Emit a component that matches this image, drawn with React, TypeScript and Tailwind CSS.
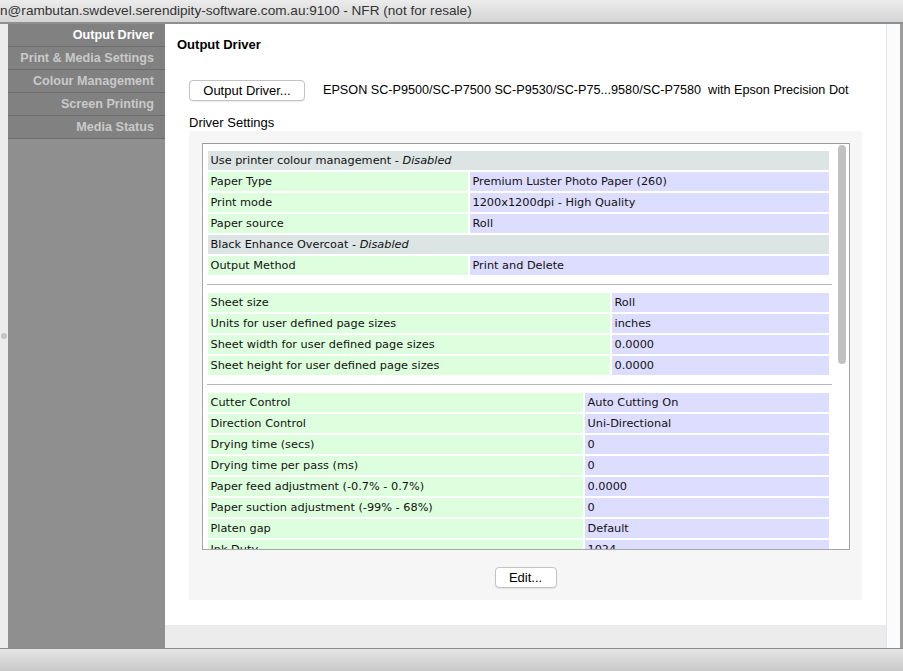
import React from 'react';

type Row = { label: string; value?: string; note?: string };

const GROUPS: { labelW: string; rows: Row[] }[] = [
  {
    labelW: 'w-[260px]',
    rows: [
      { label: 'Use printer colour management', note: 'Disabled' },
      { label: 'Paper Type', value: 'Premium Luster Photo Paper (260)' },
      { label: 'Print mode', value: '1200x1200dpi - High Quality' },
      { label: 'Paper source', value: 'Roll' },
      { label: 'Black Enhance Overcoat', note: 'Disabled' },
      { label: 'Output Method', value: 'Print and Delete' },
    ],
  },
  {
    labelW: 'w-[402px]',
    rows: [
      { label: 'Sheet size', value: 'Roll' },
      { label: 'Units for user defined page sizes', value: 'inches' },
      { label: 'Sheet width for user defined page sizes', value: '0.0000' },
      { label: 'Sheet height for user defined page sizes', value: '0.0000' },
    ],
  },
  {
    labelW: 'w-[375px]',
    rows: [
      { label: 'Cutter Control', value: 'Auto Cutting On' },
      { label: 'Direction Control', value: 'Uni-Directional' },
      { label: 'Drying time (secs)', value: '0' },
      { label: 'Drying time per pass (ms)', value: '0' },
      { label: 'Paper feed adjustment (-0.7% - 0.7%)', value: '0.0000' },
      { label: 'Paper suction adjustment (-99% - 68%)', value: '0' },
      { label: 'Platen gap', value: 'Default' },
      { label: 'Ink Duty', value: '1024' },
    ],
  },
];

const MENU = [
  { label: 'Output Driver', active: true },
  { label: 'Print & Media Settings' },
  { label: 'Colour Management' },
  { label: 'Screen Printing' },
  { label: 'Media Status' },
];

const SettingsGroup = ({ labelW, rows }: { labelW: string; rows: Row[] }) => (
  <div className="flex flex-col gap-[2px]">
    {rows.map((r) =>
      r.note ? (
        <div key={r.label} className="h-[19px] leading-[19px] pl-[3px] bg-[#dce4e4] whitespace-nowrap">
          {r.label} - <i>{r.note}</i>
        </div>
      ) : (
        <div key={r.label} className="flex gap-[2px] h-[19px] leading-[19px] whitespace-nowrap">
          <div className={`${labelW} shrink-0 pl-[3px] bg-[#ddffdd]`}>{r.label}</div>
          <div className="flex-1 pl-[3px] bg-[#ddddff]">{r.value}</div>
        </div>
      )
    )}
  </div>
);

const Separator = () => <div className="mt-[9px] mb-[8px] -ml-px -mr-[3px] h-px bg-[#b6b6b6]" />;

export default function App() {
  return (
    <div className="w-[903px] h-[671px] flex flex-col overflow-hidden bg-[#ececec] font-['Liberation_Sans',Arial,sans-serif] text-[13px] text-black">
      {/* window title */}
      <div className="h-[24px] shrink-0 flex items-center bg-gradient-to-b from-[#ececec] to-[#d5d5d5] border-b-2 border-[#8f8f8f] rounded-tr-[5px] text-[13.6px] text-[#333] whitespace-nowrap overflow-hidden">
        n@rambutan.swdevel.serendipity-software.com.au:9100 - NFR (not for resale)
      </div>

      <div className="flex flex-1 min-h-0">
        {/* left edge */}
        <div className="w-[8px] shrink-0 bg-[#ececec] flex items-center justify-center">
          <div className="w-[6px] h-[6px] rounded-full bg-[#c4c4c4]" />
        </div>

        {/* sidebar */}
        <div className="w-[157px] shrink-0 bg-[#8f8f8f] flex flex-col">
          {MENU.map((m) => (
            <div
              key={m.label}
              className={`h-[23px] leading-[22px] text-right pr-[11px] font-bold text-[12.6px] bg-[#818181] border-b border-[#6c6c6c] whitespace-nowrap ${
                m.active ? 'text-white' : 'text-[#c9c9c9]'
              }`}
            >
              {m.label}
            </div>
          ))}
        </div>

        {/* main */}
        <div className="flex-1 flex flex-col">
          <div className="h-[601px] bg-white pl-[12px] pt-[13px]">
            <h1 className="font-bold leading-[16px]">Output Driver</h1>
            <div className="ml-[12px] mt-[27px] flex items-center">
              <button className="w-[116px] h-[21px] rounded-[4px] border border-[#c3c3c3] bg-white shadow-[0_1px_1px_rgba(0,0,0,0.08)]">
                Output Driver...
              </button>
              <span className="ml-[18px] text-[12.65px] whitespace-nowrap">
                EPSON SC-P9500/SC-P7500 SC-P9530/SC-P75...9580/SC-P7580&nbsp; with Epson Precision Dot
              </span>
            </div>
            <div className="ml-[12px] mt-[14px] leading-[16px]">Driver Settings</div>
            <div className="ml-[12px] w-[673px] h-[469px] bg-[#f6f6f6] p-[12px] flex flex-col items-center">
              <div className="w-[648px] h-[408px] border border-[#a6a6a6] border-t-[#9a9a9a] bg-white flex overflow-hidden">
                <div className="flex-1 overflow-hidden pt-[7px] pl-[5px] pr-[7px] font-['DejaVu_Sans',Verdana,sans-serif] text-[11.3px] text-[#111]">
                  {GROUPS.map((g, i) => (
                    <React.Fragment key={i}>
                      {i > 0 && <Separator />}
                      <SettingsGroup labelW={g.labelW} rows={g.rows} />
                    </React.Fragment>
                  ))}
                </div>
                <div className="w-[13px] shrink-0 pt-[1px] flex justify-center">
                  <div className="w-[8px] h-[219px] rounded-full bg-[#c1c1c1]" />
                </div>
              </div>
              <button className="mt-[17px] w-[62px] h-[21px] rounded-[4px] border border-[#c3c3c3] bg-white shadow-[0_1px_1px_rgba(0,0,0,0.08)]">
                Edit...
              </button>
            </div>
          </div>
          <div className="flex-1 bg-[#ececec]" />
        </div>

        {/* right scroll track */}
        <div className="w-[14px] shrink-0 bg-[#fafbfd] border-l border-[#e3e3e3]" />
        <div className="w-[3px] shrink-0 bg-[#9c9c9c]" />
      </div>

      {/* bottom bar */}
      <div className="h-[23px] shrink-0 bg-gradient-to-b from-[#e6e6e6] to-[#c8c8c8] border-t border-[#8c8c8c]" />
    </div>
  );
}
